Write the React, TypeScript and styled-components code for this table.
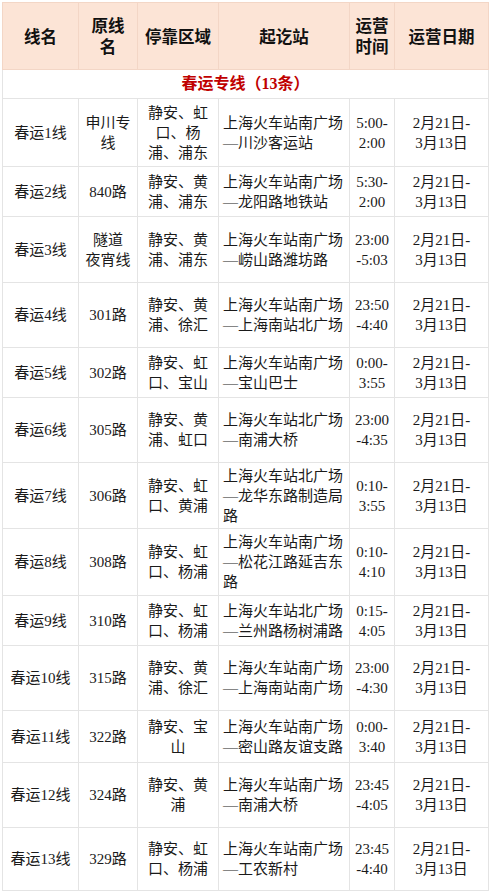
import React from "react";
import styled, { createGlobalStyle } from "styled-components";

const Global = createGlobalStyle`
  html, body { margin: 0; padding: 0; background: #fff; }
  body { font-family: "Liberation Serif", "Noto Sans CJK SC", serif; color: #1a1a1a; }
`;

const Page = styled.div`
  padding: 2px 2px 0 2px;
  width: 486px;
`;

const Table = styled.table`
  border-collapse: collapse;
  table-layout: fixed;
  width: 486px;
  font-size: 15px;
  line-height: 20px;
`;

const HeadCell = styled.th`
  background: #fce4d6;
  border: 1px solid #f3d6c6;
  font-family: "Noto Sans CJK SC", sans-serif;
  font-weight: 700;
  font-size: 16.5px;
  line-height: 21px;
  color: #111;
  text-align: center;
  vertical-align: middle;
  padding: 0 4px;
`;

const HeadRow = styled.tr`
  height: 67px;
`;

const SectionCell = styled.td`
  border: 1px solid #e4e4e4;
  color: #c00000;
  font-family: "Liberation Serif", "Noto Sans CJK SC", serif;
  font-weight: 700;
  font-size: 16px;
  text-align: center;
  height: 28px;
  padding: 0;
`;

const Row = styled.tr<{ $h: number }>`
  height: ${(p) => p.$h}px;
`;

const Cell = styled.td<{ $align?: "left" | "center" }>`
  border: 1px solid #e4e4e4;
  text-align: ${(p) => p.$align || "center"};
  vertical-align: middle;
  padding: 0 4px;
  white-space: nowrap;
  overflow: hidden;
`;

type Item = {
  name: string;
  orig: string[];
  area: string[];
  stops: string[];
  time: string[];
  h: number;
};

const data: Item[] = [
  { name: "春运1线", orig: ["申川专", "线"], area: ["静安、虹", "口、杨", "浦、浦东"], stops: ["上海火车站南广场", "—川沙客运站"], time: ["5:00-", "2:00"], h: 68 },
  { name: "春运2线", orig: ["840路"], area: ["静安、黄", "浦、浦东"], stops: ["上海火车站南广场", "—龙阳路地铁站"], time: ["5:30-", "2:00"], h: 50 },
  { name: "春运3线", orig: ["隧道", "夜宵线"], area: ["静安、黄", "浦、浦东"], stops: ["上海火车站南广场", "—崂山路潍坊路"], time: ["23:00", "-5:03"], h: 66 },
  { name: "春运4线", orig: ["301路"], area: ["静安、黄", "浦、徐汇"], stops: ["上海火车站南广场", "—上海南站北广场"], time: ["23:50", "-4:40"], h: 65 },
  { name: "春运5线", orig: ["302路"], area: ["静安、虹", "口、宝山"], stops: ["上海火车站南广场", "—宝山巴士"], time: ["0:00-", "3:55"], h: 50 },
  { name: "春运6线", orig: ["305路"], area: ["静安、黄", "浦、虹口"], stops: ["上海火车站北广场", "—南浦大桥"], time: ["23:00", "-4:35"], h: 65 },
  { name: "春运7线", orig: ["306路"], area: ["静安、虹", "口、黄浦"], stops: ["上海火车站北广场", "—龙华东路制造局", "路"], time: ["0:10-", "3:55"], h: 66 },
  { name: "春运8线", orig: ["308路"], area: ["静安、虹", "口、杨浦"], stops: ["上海火车站南广场", "—松花江路延吉东", "路"], time: ["0:10-", "4:10"], h: 67 },
  { name: "春运9线", orig: ["310路"], area: ["静安、虹", "口、杨浦"], stops: ["上海火车站北广场", "—兰州路杨树浦路"], time: ["0:15-", "4:05"], h: 50 },
  { name: "春运10线", orig: ["315路"], area: ["静安、黄", "浦、徐汇"], stops: ["上海火车站南广场", "—上海南站南广场"], time: ["23:00", "-4:30"], h: 65 },
  { name: "春运11线", orig: ["322路"], area: ["静安、宝", "山"], stops: ["上海火车站南广场", "—密山路友谊支路"], time: ["0:00-", "3:40"], h: 52 },
  { name: "春运12线", orig: ["324路"], area: ["静安、黄", "浦"], stops: ["上海火车站南广场", "—南浦大桥"], time: ["23:45", "-4:05"], h: 65 },
  { name: "春运13线", orig: ["329路"], area: ["静安、虹", "口、杨浦"], stops: ["上海火车站南广场", "—工农新村"], time: ["23:45", "-4:40"], h: 63 },
];

const Lines = ({ lines }: { lines: string[] }) => (
  <>
    {lines.map((l, i) => (
      <React.Fragment key={i}>
        {i > 0 && <br />}
        {l}
      </React.Fragment>
    ))}
  </>
);

export default function App() {
  return (
    <Page>
      <Global />
      <Table>
        <colgroup>
          <col style={{ width: 76 }} />
          <col style={{ width: 59 }} />
          <col style={{ width: 81 }} />
          <col style={{ width: 131 }} />
          <col style={{ width: 45 }} />
          <col style={{ width: 94 }} />
        </colgroup>
        <thead>
          <HeadRow>
            <HeadCell>线名</HeadCell>
            <HeadCell>原线<br />名</HeadCell>
            <HeadCell>停靠区域</HeadCell>
            <HeadCell>起讫站</HeadCell>
            <HeadCell>运营<br />时间</HeadCell>
            <HeadCell>运营日期</HeadCell>
          </HeadRow>
        </thead>
        <tbody>
          <tr>
            <SectionCell colSpan={6}>春运专线（13条）</SectionCell>
          </tr>
          {data.map((d) => (
            <Row key={d.name} $h={d.h}>
              <Cell>{d.name}</Cell>
              <Cell><Lines lines={d.orig} /></Cell>
              <Cell><Lines lines={d.area} /></Cell>
              <Cell $align="left"><Lines lines={d.stops} /></Cell>
              <Cell><Lines lines={d.time} /></Cell>
              <Cell><Lines lines={["2月21日-", "3月13日"]} /></Cell>
            </Row>
          ))}
        </tbody>
      </Table>
    </Page>
  );
}
